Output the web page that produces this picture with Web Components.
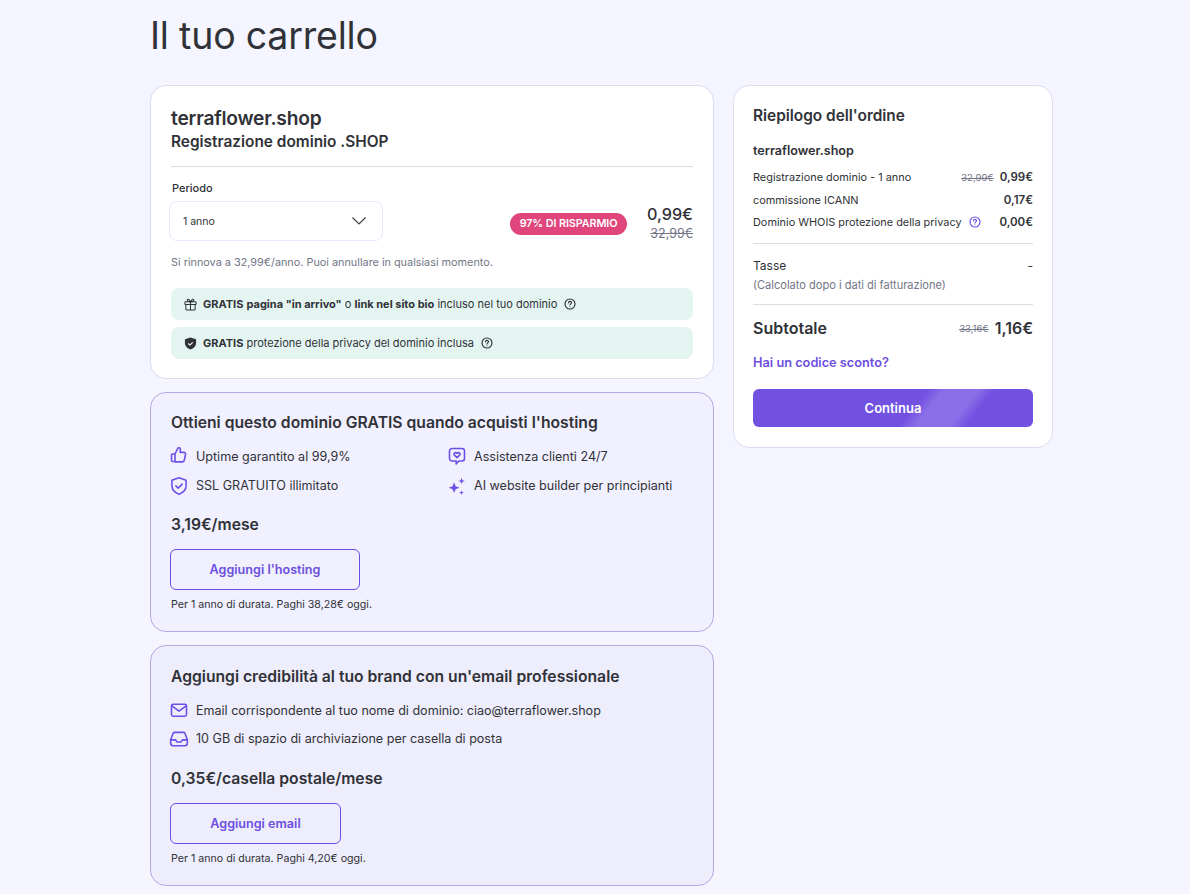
<!DOCTYPE html>
<html lang="it"><head><meta charset="utf-8"><title>Il tuo carrello</title>
<style>
html,body{margin:0;padding:0}
body{background:#f4f5ff;color:#303238;font-family:"Inter","Liberation Sans",sans-serif;font-size:12px;overflow:hidden;height:894px}
b{font-weight:600;font-size:11.900px}
b.s{font-size:10.600px}
</style></head><body>
<cart-page>
  <span slot="title">Il tuo carrello</span>
  <domain-card slot="left"></domain-card>
  <promo-card slot="left" title="Ottieni questo dominio GRATIS quando acquisti l'hosting" price="3,19€/mese" cta="Aggiungi l'hosting" note="Per 1 anno di durata. Paghi 38,28€ oggi." btn="190" columns="2" tone="a">
    <feature-item icon="thumb">Uptime garantito al 99,9%</feature-item>
    <feature-item icon="chat">Assistenza clienti 24/7</feature-item>
    <feature-item icon="shield">SSL GRATUITO illimitato</feature-item>
    <feature-item icon="spark">AI website builder per principianti</feature-item>
  </promo-card>
  <promo-card slot="left" title="Aggiungi credibilità al tuo brand con un'email professionale" price="0,35€/casella postale/mese" cta="Aggiungi email" note="Per 1 anno di durata. Paghi 4,20€ oggi." btn="171" columns="1" tone="b">
    <feature-item icon="mail">Email corrispondente al tuo nome di dominio: ciao@terraflower.shop</feature-item>
    <feature-item icon="inbox">10 GB di spazio di archiviazione per casella di posta</feature-item>
  </promo-card>
  <order-summary slot="right"></order-summary>
</cart-page>
<script>
const ICONS={
thumb:'<path d="M7.200 9.600 10.400 3.200c.4-.9 1.200-1.400 1.900-1.200 1 .2 1.500 1.100 1.400 2.200L13.300 7.600h4.400c1.500 0 2.500 1.300 2.100 2.700l-1.500 6.800c-.3 1.200-1.200 1.900-2.400 1.900H7.200M7.200 9.600H4.300c-.8 0-1.300.5-1.300 1.300v6.300c0 .8.500 1.300 1.300 1.300h2.900z"/>',
chat:'<path d="M6 3h12c1.700 0 3 1.300 3 3v9c0 1.700-1.300 3-3 3h-3.800L11 21.500V18H6c-1.700 0-3-1.300-3-3V6c0-1.700 1.300-3 3-3z"/><path d="M12 14 8.800 10.900c-1.700-1.800.9-4.100 3.200-2 2.300-2.100 4.900.2 3.200 2z"/>',
shield:'<path d="M12 2 20.500 5v6.500c0 5-3.500 8.700-8.500 10.500-5-1.800-8.500-5.500-8.500-10.500V5z"/><path d="m8.300 11.800 2.700 2.700 4.800-4.800"/>',
mail:'<rect x="3" y="5" width="18" height="14.500" rx="2"/><path d="m3.500 7 8.500 6.300L20.500 7"/>',
inbox:'<path d="M6.700 4h10.600c.8 0 1.500.5 1.800 1.200L22 13v4c0 1.700-1.300 3-3 3H5c-1.700 0-3-1.300-3-3v-4L4.900 5.200C5.200 4.500 5.900 4 6.700 4z"/><path d="M2 13h6l1.500 2.500h5L16 13h6"/>'
};
function svg(n,s){
 if(n==='spark')return `<svg width="${s}" height="${s}" viewBox="0 0 24 24" fill="#6d4fe8"><path d="M8.500 7.500 10.300 12.200 15 14l-4.700 1.800L8.500 20.500 6.700 15.800 2 14l4.700-1.800z"/><path d="M17.500 2 18.600 5 21.500 6 18.600 7 17.500 10 16.400 7 13.500 6 16.400 5z"/><path d="M17.500 17 18.200 19.300 20.500 20 18.200 20.700 17.500 23 16.800 20.700 14.500 20 16.800 19.300z"/></svg>`;
 return `<svg width="${s}" height="${s}" viewBox="0 0 24 24" fill="none" stroke="#6d4fe8" stroke-width="1.900" stroke-linecap="round" stroke-linejoin="round">${ICONS[n]}</svg>`;
}
const help=(c,s=12)=>`<svg width="${s}" height="${s}" viewBox="0 0 12 12" fill="none" stroke="${c}" stroke-width="1.150"><circle cx="6" cy="6" r="5"/><path d="M4.500 4.800c0-.9.700-1.400 1.500-1.400s1.500.5 1.500 1.300c0 1.100-1.500 1.200-1.500 2.200" stroke-linecap="round"/><circle cx="6" cy="8.700" r=".5" fill="${c}" stroke="none"/></svg>`;
class Base extends HTMLElement{
 render(html){(this.shadowRoot||this.attachShadow({mode:'open'})).innerHTML=html}
}
customElements.define('cart-page',class extends Base{connectedCallback(){this.render(`<style>
:host{display:block;padding:0 137px 0 150px}
h1{margin:0;padding-top:13px;height:85px;box-sizing:border-box;font:400 37.500px/46px Inter,"Liberation Sans",sans-serif;color:#303238;letter-spacing:-.2px}
.grid{display:grid;grid-template-columns:564px 320px;column-gap:19px;align-items:start}
.left{display:flex;flex-direction:column;gap:13px}
</style><h1><slot name="title"></slot></h1><div class="grid"><div class="left"><slot name="left"></slot></div><div><slot name="right"></slot></div></div>`)}});

customElements.define('domain-card',class extends Base{connectedCallback(){this.render(`<style>
:host{display:block;box-sizing:border-box;height:294px;background:#fff;border:1px solid #dcdcf0;border-radius:16px;padding:20px 20px 0}
.t1{font:600 19.200px/24px Inter,sans-serif;color:#303238;letter-spacing:-.2px}
.t2{font:600 15.400px/24px Inter,sans-serif;color:#303238;}
hr{border:0;border-top:1px solid #dcdce6;margin:12px 0 0}
.lab{font:500 11px/14px Inter,sans-serif;margin:14px 0 0 1px;color:#303238}
.row{display:flex;align-items:center;margin-top:6px;height:40px}
.sel{box-sizing:border-box;width:214px;height:40px;margin-left:-2px;border:1px solid #e9e9fb;border-radius:8px;display:flex;align-items:center;justify-content:space-between;padding:0 15px 0 13px;font:400 10.500px Inter,sans-serif;color:#303238;background:#fff}
.badge{margin:6px 0 0 auto;background:#e0467c;color:#fff;font:600 10.800px/22px Inter,sans-serif;height:22px;border-radius:11px;box-sizing:border-box;width:117px;white-space:nowrap;text-align:center;letter-spacing:-.1px}
.price{margin:6px 0 0 19px;text-align:right;width:47px;white-space:nowrap}
.now{font:500 16.200px/20px Inter,sans-serif;color:#303238;}
.was{font:400 12.500px/20px Inter,sans-serif;color:#727586;text-decoration:line-through}
.note{font:400 10.850px/14px Inter,sans-serif;color:#727586;margin-top:14px}
.perks{display:flex;flex-direction:column;gap:7px;margin-top:19px}
</style>
<div class="t1">terraflower.shop</div><div class="t2">Registrazione dominio .SHOP</div><hr>
<div class="lab">Periodo</div>
<div class="row"><div class="sel"><span>1 anno</span><svg width="16" height="10" viewBox="0 0 16 10" fill="none" stroke="#3a3c44" stroke-width="1.100"><path d="m1.500 1.500 6.500 6.500 6.500-6.500"/></svg></div>
<div class="badge">97% DI RISPARMIO</div><div class="price"><div class="now">0,99€</div><div class="was">32,99€</div></div></div>
<div class="note">Si rinnova a 32,99€/anno. Puoi annullare in qualsiasi momento.</div>
<div class="perks"><perk-bar icon="gift"><b>GRATIS</b> <b class="s">pagina "in arrivo"</b> o <b class="s">link nel sito bio</b> incluso nel tuo dominio</perk-bar><perk-bar icon="shield"><b>GRATIS</b> protezione della privacy del dominio inclusa</perk-bar></div>`)}});

customElements.define('perk-bar',class extends Base{connectedCallback(){
const gift='<svg width="13" height="13" viewBox="0 0 14 14" fill="none" stroke="#303238" stroke-width="1.100" stroke-linejoin="round"><rect x="1" y="4" width="12" height="3" rx=".6"/><path d="M2 7v5c0 .6.400 1 1 1h8c.6 0 1-.4 1-1V7M7 4v9M7 4C5 4 3.500 3.300 3.500 2.100 3.500 1 5.500.6 7 4zm0 0c2 0 3.500-.7 3.500-1.900C10.500 1 8.500.6 7 4z"/></svg>';
const sh='<svg width="13" height="13" viewBox="0 0 14 14"><path fill="#303238" d="M7 .5 13 2.500v4.200c0 3.200-2.300 5.600-6 6.800-3.700-1.200-6-3.600-6-6.800V2.500z"/><path d="m4.600 7 1.800 1.700 3-3" fill="none" stroke="#fff" stroke-width="1.200"/></svg>';
this.render(`<style>
:host{display:flex;box-sizing:border-box;height:32px;align-items:center;background:#e4f5f1;border-radius:8px;padding:0 0 0 13px;font:400 11px Inter,sans-serif;color:#303238;white-space:nowrap}
.i{display:flex;width:19px}.h{display:flex;margin-left:7px}
</style><span class="i">${this.getAttribute('icon')==='gift'?gift:sh}</span><span><slot></slot></span><span class="h">${help('#303238')}</span>`)}});

customElements.define('promo-card',class extends Base{connectedCallback(){const a=n=>this.getAttribute(n),A=a('tone')==='a';this.render(`<style>
:host{display:block;box-sizing:border-box;height:${A?240:241}px;background:${A?'#f1f0fe':'#eeedfc'};border:1px solid #b5a9e2;border-radius:16px;padding:${A?18:19}px 20px 0}
.t{font:600 15.700px/24px Inter,sans-serif;color:#303238;white-space:nowrap}
.g{display:grid;grid-template-columns:${a('columns')==='2'?'278px 1fr':'1fr'};row-gap:${A?5:4}px;margin-top:9px}
.p{font:600 15.700px/20px Inter,sans-serif;margin-top:${A?17:18}px;color:#303238}
button{display:block;box-sizing:border-box;margin:14px 0 0 -1px;width:${a('btn')}px;height:41px;border:1px solid #6d4fe0;border-radius:6px;background:transparent;color:#6d4fe0;font:600 12.600px Inter,sans-serif}
.n{font:400 10.650px/14px Inter,sans-serif;margin-top:8px;color:#303238}
</style><div class="t">${a('title')}</div><div class="g"><slot></slot></div><div class="p">${a('price')}</div><button>${a('cta')}</button><div class="n">${a('note')}</div>`)}});

customElements.define('feature-item',class extends Base{connectedCallback(){this.render(`<style>
:host{display:flex;align-items:center;height:24.500px;font:400 12.550px Inter,sans-serif;color:#303238;white-space:nowrap}
.i{display:flex;width:27px;margin-left:-2px}
</style><span class="i">${svg(this.getAttribute('icon'),20)}</span><span><slot></slot></span>`)}});

customElements.define('summary-row',class extends Base{connectedCallback(){const w=this.getAttribute('was');this.render(`<style>
:host{display:flex;align-items:center;height:22.500px;font:400 10.900px Inter,sans-serif;color:#303238;white-space:nowrap}
.v{margin-left:auto;font-weight:600;font-size:11.500px}
.w{margin-left:auto;color:#727586;text-decoration:line-through;font-size:9.500px;margin-right:6px}
.w+.v{margin-left:0}
.h{display:flex;margin-left:7px}
</style><span><slot></slot></span>${this.hasAttribute('help')?`<span class="h">${help('#6d4fe8')}</span>`:''}${w?`<span class="w">${w}</span>`:''}<span class="v">${this.getAttribute('value')}</span>`)}});

customElements.define('order-summary',class extends Base{connectedCallback(){this.render(`<style>
:host{display:block;box-sizing:border-box;height:363px;background:#fff;border:1px solid #dcdcf0;border-radius:16px;padding:18px 19px 0}
.t{font:600 15.400px/24px Inter,sans-serif;color:#303238}
.d{font:600 12.600px/16px Inter,sans-serif;margin:15px 0 7px;color:#303238}
hr{border:0;border-top:1px solid #dcdce6;margin:0}
.tax{display:flex;justify-content:space-between;font:400 12px/16px Inter,sans-serif;margin-top:14px;color:#303238}
.sub{font:400 11.050px/16px Inter,sans-serif;color:#727586;margin:3px 0 11px}
.tot{display:flex;align-items:center;height:24px;margin-top:11px;font:600 16px Inter,sans-serif}
.tot .w{margin-left:auto;font:400 9.500px Inter,sans-serif;color:#727586;text-decoration:line-through;margin-right:6px}
.link{font:600 12.750px/16px Inter,sans-serif;color:#6d4fe0;margin-top:15px}
button{display:block;width:100%;height:38px;margin-top:18px;border:0;border-radius:6px;color:#fff;font:600 13px Inter,sans-serif;background:linear-gradient(128deg,#7250e0 0 138px,#8a6fe8 151px 178px,#7250e0 191px)}
</style><div class="t">Riepilogo dell'ordine</div><div class="d">terraflower.shop</div>
<summary-row value="0,99€" was="32,99€">Registrazione dominio - 1 anno</summary-row>
<summary-row value="0,17€">commissione ICANN</summary-row>
<summary-row value="0,00€" help>Dominio WHOIS protezione della privacy</summary-row>
<hr style="margin-top:9.500px"><div class="tax"><span>Tasse</span><span>-</span></div><div class="sub">(Calcolato dopo i dati di fatturazione)</div><hr>
<div class="tot"><span>Subtotale</span><span class="w">33,16€</span><span>1,16€</span></div>
<div class="link">Hai un codice sconto?</div><button>Continua</button>`)}});
</script></body></html>
